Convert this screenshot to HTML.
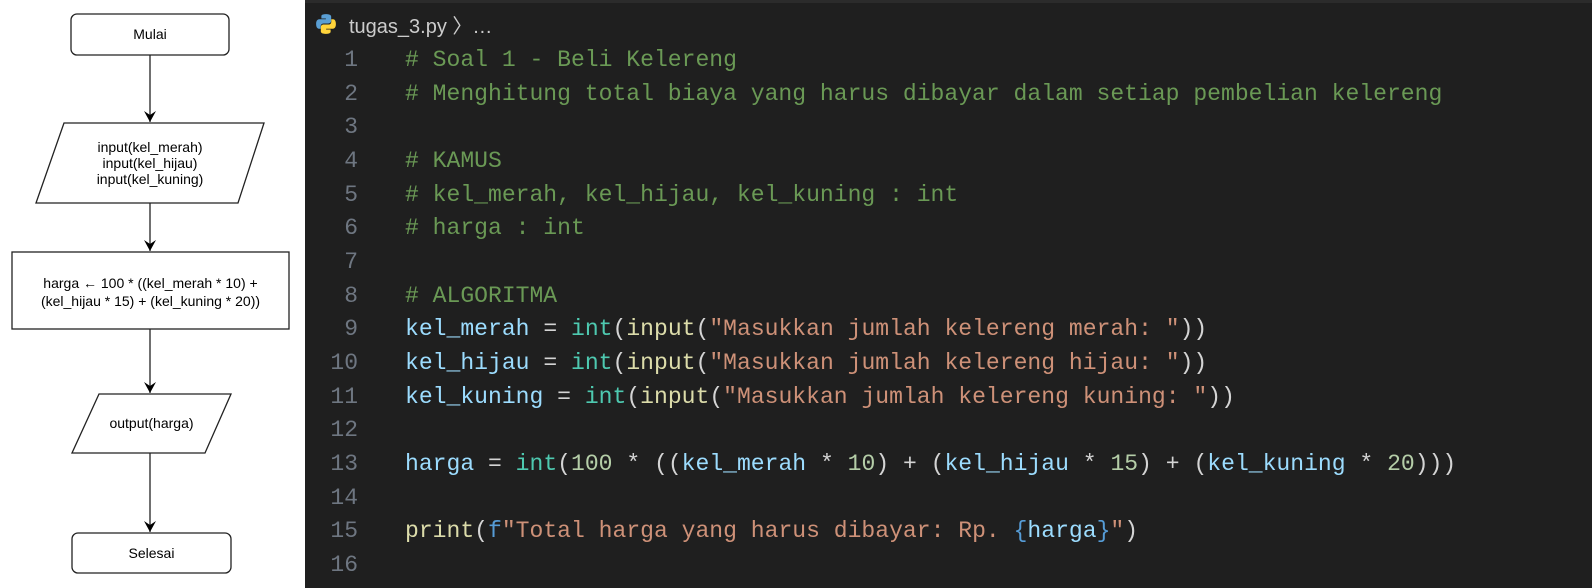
<!DOCTYPE html>
<html><head><meta charset="utf-8"><style>
*{margin:0;padding:0;box-sizing:border-box}
body{width:1592px;height:588px;background:#fff;position:relative;overflow:hidden;font-family:"Liberation Sans",Arial,sans-serif}
#ed{position:absolute;left:305px;top:0;width:1287px;height:588px;background:#1f1f1f}
#strip{position:absolute;left:0;top:0;width:100%;height:3px;background:#2b2b2b}
#bc{position:absolute;left:44px;top:10px;font-size:20px;color:#cccccc;white-space:pre}
.ln{position:absolute;left:3px;width:50px;text-align:right;color:#6e7681;font-family:"Liberation Mono",monospace;font-size:23px}
.cd{position:absolute;left:100px;color:#d4d4d4;font-family:"Liberation Mono",monospace;font-size:23.05px;white-space:pre}
.c{color:#6a9955}.v{color:#9cdcfe}.t{color:#4ec9b0}.f{color:#dcdcaa}.s{color:#ce9178}.n{color:#b5cea8}.k{color:#569cd6}
.fc{position:absolute;font-size:14px;color:#000;text-align:center;line-height:16px}
</style></head><body>
<svg width="305" height="588" style="position:absolute;left:0;top:0">
<defs><marker id="a" markerWidth="12" markerHeight="12" refX="6" refY="11" orient="0" markerUnits="userSpaceOnUse"><path d="M0,0 L6,11 L12,0 L6,4 Z" fill="#000"/></marker></defs>
<g stroke="#222" stroke-width="1.3" fill="#fff">
<rect x="71" y="14" width="158" height="41" rx="6"/>
<path d="M64,123 L264,123 L238,203 L36,203 Z"/>
<rect x="12" y="252" width="277" height="77"/>
<path d="M99,394 L231,394 L205,453 L72,453 Z"/>
<rect x="72" y="533" width="159" height="40" rx="6"/>
</g>
<g stroke="#222" stroke-width="1.3" fill="none">
<line x1="150" y1="55" x2="150" y2="122" marker-end="url(#a)"/>
<line x1="150" y1="203" x2="150" y2="251" marker-end="url(#a)"/>
<line x1="150" y1="329" x2="150" y2="393" marker-end="url(#a)"/>
<line x1="150" y1="453" x2="150" y2="532" marker-end="url(#a)"/>
</g>
</svg>
<div class="fc" style="left:71px;top:26px;width:158px">Mulai</div>
<div class="fc" style="left:50px;top:139px;width:200px">input(kel_merah)<br>input(kel_hijau)<br>input(kel_kuning)</div>
<div class="fc" style="left:12px;top:274px;width:277px;line-height:18px">harga ← 100 * ((kel_merah * 10) +<br>(kel_hijau * 15) + (kel_kuning * 20))</div>
<div class="fc" style="left:72px;top:415px;width:159px">output(harga)</div>
<div class="fc" style="left:72px;top:545px;width:159px">Selesai</div>
<div id="ed"><div id="strip"></div>
<svg style="position:absolute;left:10px;top:12px" width="22" height="24" viewBox="0 0 20 20">
<path d="M9.8 1C5.5 1 5.8 2.9 5.8 2.9V5h4.1v.7H4.1S1 5.3 1 9.9s2.6 4.4 2.6 4.4h1.6v-2.2s-.1-2.6 2.6-2.6h4.4s2.5 0 2.5-2.4V3.3S15.1 1 9.8 1z" fill="#5a9fd4"/>
<path d="M10.2 19c4.3 0 4-1.9 4-1.9V15h-4.1v-.7h5.8s3.1.4 3.1-4.2-2.6-4.4-2.6-4.4h-1.6v2.2s.1 2.6-2.6 2.6H7.8s-2.5 0-2.5 2.4v3.8S4.9 19 10.2 19z" fill="#ffd43b"/>
</svg>
<div id="bc">tugas_3.py 〉…</div>
</div>
<div id="x" style="position:absolute;left:305px;top:2px">
<div class="ln" style="top:45px">1</div><div class="cd" style="top:45px"><span class="c"># Soal 1 - Beli Kelereng</span></div>
<div class="ln" style="top:79px">2</div><div class="cd" style="top:79px"><span class="c"># Menghitung total biaya yang harus dibayar dalam setiap pembelian kelereng</span></div>
<div class="ln" style="top:112px">3</div>
<div class="ln" style="top:146px">4</div><div class="cd" style="top:146px"><span class="c"># KAMUS</span></div>
<div class="ln" style="top:180px">5</div><div class="cd" style="top:180px"><span class="c"># kel_merah, kel_hijau, kel_kuning : int</span></div>
<div class="ln" style="top:213px">6</div><div class="cd" style="top:213px"><span class="c"># harga : int</span></div>
<div class="ln" style="top:247px">7</div>
<div class="ln" style="top:281px">8</div><div class="cd" style="top:281px"><span class="c"># ALGORITMA</span></div>
<div class="ln" style="top:314px">9</div><div class="cd" style="top:314px"><span class="v">kel_merah</span> = <span class="t">int</span>(<span class="f">input</span>(<span class="s">"Masukkan jumlah kelereng merah: "</span>))</div>
<div class="ln" style="top:348px">10</div><div class="cd" style="top:348px"><span class="v">kel_hijau</span> = <span class="t">int</span>(<span class="f">input</span>(<span class="s">"Masukkan jumlah kelereng hijau: "</span>))</div>
<div class="ln" style="top:382px">11</div><div class="cd" style="top:382px"><span class="v">kel_kuning</span> = <span class="t">int</span>(<span class="f">input</span>(<span class="s">"Masukkan jumlah kelereng kuning: "</span>))</div>
<div class="ln" style="top:415px">12</div>
<div class="ln" style="top:449px">13</div><div class="cd" style="top:449px"><span class="v">harga</span> = <span class="t">int</span>(<span class="n">100</span> * ((<span class="v">kel_merah</span> * <span class="n">10</span>) + (<span class="v">kel_hijau</span> * <span class="n">15</span>) + (<span class="v">kel_kuning</span> * <span class="n">20</span>)))</div>
<div class="ln" style="top:483px">14</div>
<div class="ln" style="top:516px">15</div><div class="cd" style="top:516px"><span class="f">print</span>(<span class="k">f</span><span class="s">"Total harga yang harus dibayar: Rp. </span><span class="k">{</span><span class="v">harga</span><span class="k">}</span><span class="s">"</span>)</div>
<div class="ln" style="top:550px">16</div>
</div>
</body></html>
